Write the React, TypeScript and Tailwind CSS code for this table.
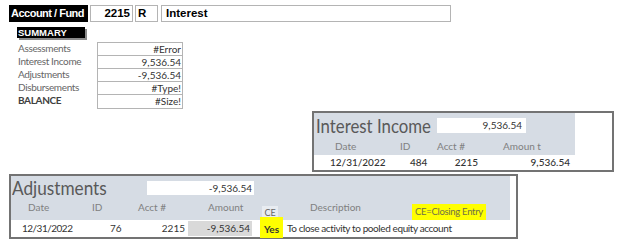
import React from 'react';

// ============================================
// Data
// ============================================

const summaryRows = [
  { label: 'Assessments', value: '#Error', bold: false },
  { label: 'Interest Income', value: '9,536.54', bold: false },
  { label: 'Adjustments', value: '-9,536.54', bold: false },
  { label: 'Disbursements', value: '#Type!', bold: false },
  { label: 'BALANCE', value: '#Size!', bold: true },
];

const CAL = { fontFamily: 'Lato, "Liberation Sans", sans-serif' };
const ARIAL = { fontFamily: '"Liberation Sans", Arial, sans-serif' };

// ============================================
// Pieces
// ============================================

function HeaderBar() {
  return (
    <div className="flex pt-[5px] pl-[9px] text-[11.5px] font-bold text-black whitespace-nowrap" style={ARIAL}>
      <div className="w-[79px] h-[17px] bg-black text-white flex items-center pl-[2px] text-[11px] tracking-[-0.5px]">
        Account / Fund
      </div>
      <div className="ml-[2px] w-[43px] h-[17px] border border-[#b4b4b4] flex items-center justify-end pr-[2px]">
        2215
      </div>
      <div className="ml-[2px] w-[23px] h-[17px] border border-[#b4b4b4] flex items-center pl-[2px]">
        R
      </div>
      <div className="ml-[3px] w-[290px] h-[17px] border border-[#b4b4b4] flex items-center pl-[4px]">
        Interest
      </div>
    </div>
  );
}

function Summary() {
  return (
    <div className="pl-[17px] whitespace-nowrap">
      <div
        className="mt-[5px] w-[68px] h-[11px] bg-black text-white text-[9.5px] font-bold leading-[11px] pl-[1px] shadow-[2px_2px_0_#8a8a8a]"
        style={ARIAL}
      >
        SUMMARY
      </div>
      <div className="flex mt-[4px] pl-px" style={CAL}>
        <div className="w-[79px]">
          {summaryRows.map((r) => (
            <div
              key={r.label}
              className={`h-[13px] leading-[13px] text-[10px] tracking-[-0.35px] ${r.bold ? 'text-[#404040] font-bold' : 'text-[#666666]'}`}
            >
              {r.label}
            </div>
          ))}
        </div>
        <div className="w-[86px] border border-[#b4b4b4] divide-y divide-[#b4b4b4]">
          {summaryRows.map((r) => (
            <div
              key={r.label}
              className="h-[13px] leading-[12px] text-[10px] text-right pr-[1px] text-[#333333]"
            >
              {r.value}
            </div>
          ))}
        </div>
      </div>
    </div>
  );
}

function InterestPanel() {
  return (
    <div className="ml-[312px] mt-[2px] w-[302px] h-[61px] border-2 border-[#737373] whitespace-nowrap" style={CAL}>
      <div className="w-[261px] h-[42px] bg-[#d6dce4]">
        <div className="flex items-center h-[25px]">
          <div className="w-[123px] pl-[2px] h-[25px]">
            <div className="inline-block origin-left scale-x-[0.84] text-[20px] leading-[25px] text-[#595959]">
              Interest Income
            </div>
          </div>
          <div className="w-[89px] h-[15px] bg-white text-[10px] leading-[15px] text-right pr-[4px] text-[#333333]">
            9,536.54
          </div>
        </div>
        <div className="flex items-center h-[17px] text-[10px] text-[#808080]">
          <div className="w-[81px] pl-[21px]">Date</div>
          <div className="w-[37px] pl-[5px]">ID</div>
          <div className="w-[48px] pl-[5px]">Acct #</div>
          <div className="w-[95px] pl-[23px]">Amoun t</div>
        </div>
      </div>
      <div className="flex items-center h-[15px] text-[10px] text-[#333333] font-medium">
        <div className="w-[81px] pl-[16px]">12/31/2022</div>
        <div className="w-[37px] pl-[15px]">484</div>
        <div className="w-[48px] text-right pr-[2px]">2215</div>
        <div className="w-[95px] text-right pr-[5px]">9,536.54</div>
      </div>
    </div>
  );
}

function AdjustmentsPanel() {
  return (
    <div className="ml-[9px] mt-[2px] w-[509px] h-[65px] border-2 border-[#737373] whitespace-nowrap" style={CAL}>
      <div className="w-[499px] h-[44px] bg-[#d6dce4]">
        <div className="flex items-center h-[23px]">
          <div className="w-[136px] pl-[1px] h-[23px]">
            <div className="inline-block origin-left scale-x-[0.86] text-[20px] leading-[23px] text-[#595959]">
              Adjustments
            </div>
          </div>
          <div className="w-[107px] h-[14px] bg-white text-[10px] leading-[14px] text-right pr-[2px] text-[#333333]">
            -9,536.54
          </div>
        </div>
        <div className="flex items-end h-[21px] text-[10px] text-[#808080]">
          <div className="w-[69px] pl-[17px] pb-[5px]">Date</div>
          <div className="w-[45px] pl-[12px] pb-[5px]">ID</div>
          <div className="w-[62px] pl-[13px] pb-[5px]">Acct #</div>
          <div className="w-[69px] pl-[21px] pb-[5px]">Amount</div>
          <div className="w-[31px] pb-px">
            <div className="ml-[6px] w-[16px] h-[13px] bg-[#e8ecf1] text-center leading-[13px] text-[9px] text-[#666666]">
              CE
            </div>
          </div>
          <div className="w-[125px] pl-[23px] pb-[5px]">Description</div>
          <div className="w-[74px] h-[16px] bg-[#ffff00] text-center leading-[16px] text-[9.5px] tracking-[-0.3px] text-[#6f6f4a]">
            CE=Closing Entry
          </div>
        </div>
      </div>
      <div className="flex items-center h-[17px] text-[10px] text-[#333333]">
        <div className="w-[69px] pl-[11px] tracking-[-0.5px]">12/31/2022</div>
        <div className="w-[45px] pl-[30px]">76</div>
        <div className="w-[62px] text-right pr-[2px]">2215</div>
        <div className="w-[69px]">
          <div className="ml-px w-[64px] h-[15px] bg-[#d9d9d9] text-right pr-[2px] leading-[15px]">
            -9,536.54
          </div>
        </div>
        <div className="w-[31px]">
          <div className="ml-[4px] -mt-[3px] w-[23px] h-[21px] bg-[#ffff00] font-bold text-center leading-[24px] text-[#333333]">
            Yes
          </div>
        </div>
        <div className="tracking-[-0.4px]">To close activity to pooled equity account</div>
      </div>
    </div>
  );
}

// ============================================
// App
// ============================================

export default function App() {
  return (
    <div className="w-[635px] h-[243px] bg-white overflow-hidden">
      <HeaderBar />
      <Summary />
      <InterestPanel />
      <AdjustmentsPanel />
    </div>
  );
}
